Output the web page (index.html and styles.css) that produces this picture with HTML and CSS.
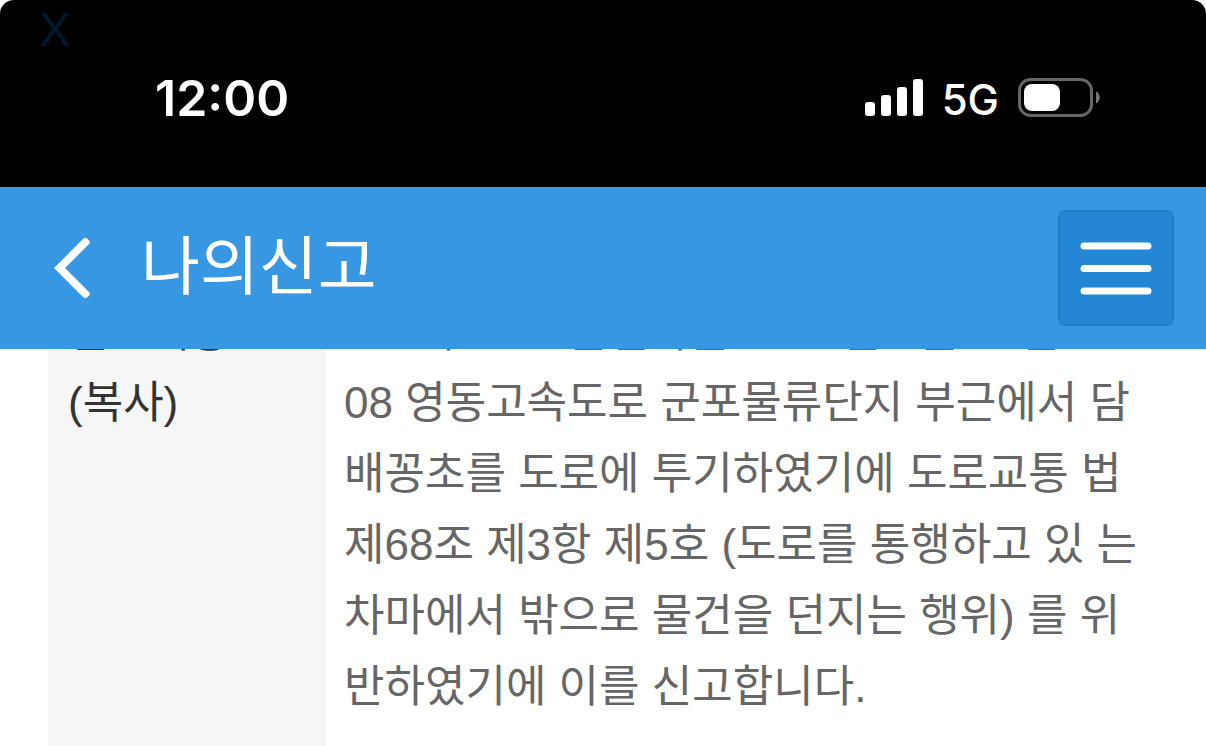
FILE: index.html
```html
<!DOCTYPE html>
<html lang="ko">
<head>
    <meta charset="UTF-8">
    <meta name="viewport" content="width=device-width, initial-scale=1.0">
    <title>나의신고</title>
    <link rel="stylesheet" href="styles.css">
</head>
<body>
<div class="wrap">
    <div class="status">
        <span class="close">X</span>
        <span class="time">12:00</span>
        <div class="signal">
            <svg class="bars" width="58" height="37" viewBox="0 0 58 37" fill="#fff">
                <rect x="0" y="23" width="10" height="14" rx="3"/>
                <rect x="16" y="16" width="10" height="21" rx="3"/>
                <rect x="32" y="8" width="10" height="29" rx="3"/>
                <rect x="48" y="0" width="10" height="37" rx="3"/>
            </svg>
            <span class="network">5G</span>
            <svg class="battery" width="82" height="39" viewBox="0 0 82 39">
                <rect x="1.5" y="1.5" width="72" height="36" rx="11" fill="none" stroke="#666" stroke-width="3"/>
                <rect x="6" y="6" width="36" height="27" rx="8" fill="#fff"/>
                <path d="M78 13.500c5 2 5 10 0 12z" fill="#777"/>
            </svg>
        </div>
    </div>

    <header class="header">
        <button type="button" class="back" aria-label="뒤로">
            <svg width="37" height="62" viewBox="0 0 37 62" fill="#fff">
                <path d="M1 31L30.500 1.500q2-1.500 4 .5l1.500 1.500q1.500 2 0 3.500L12 31l24 24q1.500 2 0 3.500l-1.500 1.500q-2 2-4 .5z"/>
            </svg>
        </button>
        <h1>나의신고</h1>
        <button type="button" class="menu" aria-label="메뉴">
            <svg width="72" height="53" viewBox="0 0 72 53" stroke="#fff" stroke-width="7" stroke-linecap="round">
                <path d="M4 4h64M4 26.500h64M4 49h64"/>
            </svg>
        </button>
    </header>

    <main class="content">
        <table class="report">
            <tr>
                <th scope="row">신고내용<br><button type="button" class="copy">(복사)</button></th>
                <td>
                    000가0000 운전자는 0000년 0월 00일 00<br>
                    08 영동고속도로 군포물류단지 부근에서 담<br>
                    배꽁초를 도로에 투기하였기에 도로교통 법<br>
                    제68조 제3항 제5호 (도로를 통행하고 있 는<br>
                    차마에서 밖으로 물건을 던지는 행위) 를 위<br>
                    반하였기에 이를 신고합니다.
                </td>
            </tr>
        </table>
    </main>
</div>
</body>
</html>
```

FILE: styles.css
```css
* {box-sizing: border-box;}
body {margin: 0; background: #fff; font-family: "Liberation Sans", "Noto Sans CJK KR", sans-serif;}
button {padding: 0; border: 0; background: none; font: inherit; color: inherit; cursor: pointer;}
svg {display: block;}
.wrap {height: 100vh; overflow: hidden;}

/* 상태바 */
.status {position: relative; display: flex; justify-content: space-between; align-items: center; height: 187px; padding: 8px 106px 0 155px; border-radius: 14px 14px 0 0; background: #000; color: #fff; font-family: Inter, sans-serif;}
.close {position: absolute; top: 0; left: 39px; color: #03172d; font: 48px/60px "Liberation Sans", sans-serif;}
.time {font-size: 50px; font-weight: 600;}
.signal {display: flex; align-items: center; gap: 19px;}
.network {padding-top: 4px; font-size: 42px; font-weight: 500; line-height: 36px;}

/* 상단 메뉴 */
.header {position: relative; z-index: 1; display: flex; align-items: center; height: 162px; padding: 0 32px 0 53px; background: #3897e2; color: #fff;}
.header h1 {flex: 1; margin: 0 0 2px 51px; font-size: 64px; font-weight: 400; line-height: 64px;}
.menu {display: flex; justify-content: center; align-items: center; width: 116px; height: 116px; border: 2px solid #217fca; border-radius: 7px; background: #2586d5;}

/* 신고 내용 */
.content {margin-top: -53px; padding: 0 48px;}
.report {width: 100%; border-collapse: collapse; font-size: 44px; line-height: 71px;}
.report th {width: 278px; height: 500px; padding: 0 20px; background: #f6f6f6; color: #333; font-weight: 400; text-align: left; vertical-align: top;}
.report td {padding: 0 0 0 18px; color: #666; vertical-align: top; white-space: nowrap;}
```
